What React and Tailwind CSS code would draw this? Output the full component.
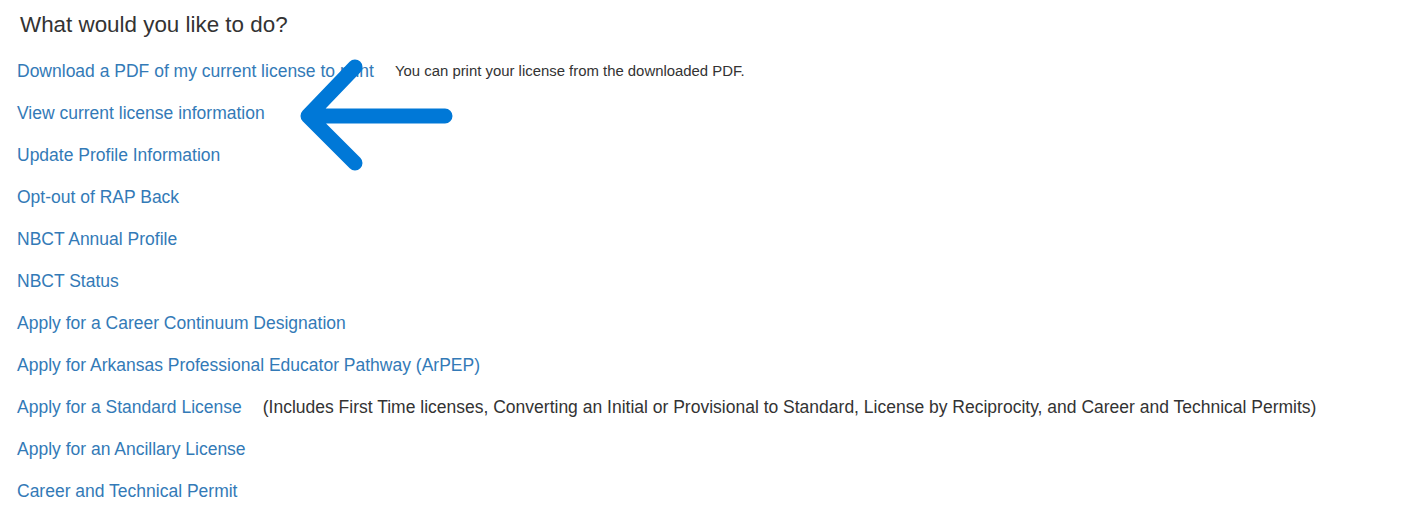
import React from "react";

const links = [
  { label: "Download a PDF of my current license to print", note: "You can print your license from the downloaded PDF.", small: true },
  { label: "View current license information" },
  { label: "Update Profile Information" },
  { label: "Opt-out of RAP Back" },
  { label: "NBCT Annual Profile" },
  { label: "NBCT Status" },
  { label: "Apply for a Career Continuum Designation" },
  { label: "Apply for Arkansas Professional Educator Pathway (ArPEP)" },
  {
    label: "Apply for a Standard License",
    note: "(Includes First Time licenses, Converting an Initial or Provisional to Standard, License by Reciprocity, and Career and Technical Permits)",
  },
  { label: "Apply for an Ancillary License" },
  { label: "Career and Technical Permit" },
];

export default function App() {
  return (
    <div className="relative w-[1417px] h-[511px] bg-white overflow-hidden font-['Liberation_Sans',Arial,sans-serif] text-[#333]">
      <h3 className="pl-[20px] pt-[10px] text-[22.4px] leading-[30px] text-[#333]">What would you like to do?</h3>
      <ul className="pl-[17px] pt-[19px] flex flex-col gap-[18px]">
        {links.map((l) => (
          <li key={l.label} className="flex items-center h-[24px]">
            <a href="#" className="text-[17.5px] text-[#337ab7] hover:underline">
              {l.label}
            </a>
            {l.note && (
              <span className={l.small ? "ml-[21px] text-[14.9px] text-[#333]" : "ml-[21px] text-[17.5px] text-[#333]"}>
                {l.note}
              </span>
            )}
          </li>
        ))}
      </ul>
      <svg className="absolute left-[298px] top-[58px]" width="160" height="115" viewBox="0 0 160 115">
        <path
          d="M147 58 H10 M57 9 L10 58 L57 105"
          fill="none"
          stroke="#0078d7"
          strokeWidth="15"
          strokeLinecap="round"
          strokeLinejoin="round"
        />
      </svg>
    </div>
  );
}
